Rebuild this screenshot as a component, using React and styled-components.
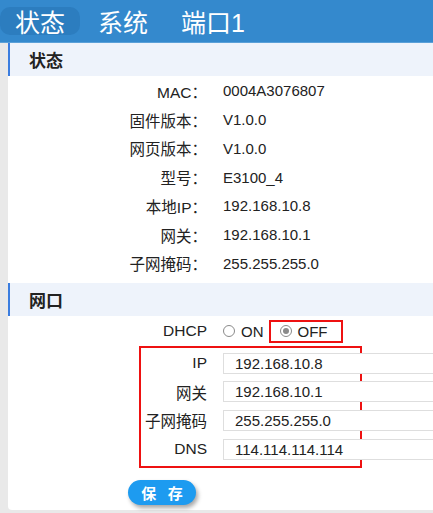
import React from "react";
import styled, { createGlobalStyle } from "styled-components";

const Global = createGlobalStyle`
  html, body { margin: 0; padding: 0; }
  body {
    background: #e9e9e9;
    font-family: "Liberation Sans", Arial, "Noto Sans CJK SC", sans-serif;
    color: #222;
    overflow: hidden;
  }
`;

const Page = styled.div`
  width: 433px;
  height: 513px;
  display: flex;
  flex-direction: column;
  overflow: hidden;
`;

const TopBar = styled.div`
  height: 43px;
  flex: none;
  background: #3489cd;
  display: flex;
  align-items: center;
  gap: 3px;
  border-bottom: 1px solid #5aa0d8;
  box-sizing: border-box;
`;

const Tab = styled.div`
  height: 28px;
  padding: 0 15px;
  border-radius: 10px;
  display: flex;
  align-items: center;
  font-size: 25px;
  color: #fff;
  font-family: "Liberation Sans", "Noto Sans CJK SC", sans-serif;
  background: ${(p) => (p.$active ? "#2c7dbf" : "transparent")};
`;

const Body = styled.div`
  flex: 1;
  display: flex;
  padding-left: 8px;
`;

const Panel = styled.div`
  flex: 1;
  background: #fff;
  border-bottom-left-radius: 4px;
  margin-bottom: 3px;
  display: flex;
  flex-direction: column;
`;

const SectionHeader = styled.div`
  height: 33px;
  flex: none;
  background: #eef3fb;
  border-left: 2px solid #3b7ddf;
  display: flex;
  align-items: center;
  padding-left: 19px;
  font-size: 17px;
  font-weight: bold;
  color: #222;
  font-family: "Noto Sans CJK SC", sans-serif;
`;

const InfoList = styled.div`
  padding: 0.5px 0 5px;
  display: flex;
  flex-direction: column;
`;

const InfoRow = styled.div`
  height: 28.75px;
  display: grid;
  grid-template-columns: 199px 1fr;
  column-gap: 16px;
  align-items: center;
`;

const Label = styled.div`
  text-align: right;
  font-size: 15.5px;
  color: #222;
`;

const Value = styled.div`
  font-size: 15px;
  color: #222;
`;

const NetArea = styled.div`
  display: flex;
  flex-direction: column;
`;

const DhcpRow = styled.div`
  height: 29px;
  margin-top: 1px;
  display: grid;
  grid-template-columns: 199px 1fr;
  column-gap: 16px;
  align-items: center;
`;

const RadioGroup = styled.div`
  display: flex;
  align-items: center;
`;

const RadioOption = styled.label`
  display: inline-flex;
  align-items: center;
  gap: 6px;
  font-size: 15px;
  color: #222;
`;

const RadioCircle = styled.span`
  width: 12px;
  height: 12px;
  box-sizing: border-box;
  border-radius: 50%;
  border: 1px solid #8a8a8a;
  background: #fff;
  display: inline-flex;
  align-items: center;
  justify-content: center;
  &::after {
    content: "";
    width: 6px;
    height: 6px;
    border-radius: 50%;
    background: ${(p) => (p.$checked ? "#8a8a8a" : "transparent")};
  }
`;

const Highlight = styled.div`
  border: 2px solid #ee1111;
  box-sizing: border-box;
  height: 23px;
  display: flex;
  align-items: center;
  padding: 0 13px 0 9px;
  margin-left: 5px;
`;

const FieldBox = styled.div`
  margin-left: 131px;
  width: 223px;
  box-sizing: border-box;
  border: 2px solid #ee1111;
  padding: 1px 0 2px;
  display: flex;
  flex-direction: column;
`;

const FieldRow = styled.div`
  height: 28.7px;
  display: grid;
  grid-template-columns: 66px 240px;
  column-gap: 16px;
  align-items: center;
`;

const FieldLabel = styled.div`
  text-align: right;
  font-size: 15.5px;
  color: #222;
`;

const Input = styled.input`
  height: 21px;
  box-sizing: border-box;
  border: 1px solid #dedede;
  border-right: none;
  padding: 0 0 0 11px;
  font-family: "Liberation Sans", Arial, sans-serif;
  font-size: 15px;
  color: #222;
  outline: none;
  width: 240px;
`;

const SaveButton = styled.button`
  margin: 12px 0 0 120px;
  width: 68px;
  height: 25px;
  border: none;
  border-radius: 13px;
  background: #1d9bf0;
  color: #fff;
  font-size: 15px;
  font-weight: bold;
  font-family: "Noto Sans CJK SC", sans-serif;
  letter-spacing: 4px;
  padding: 0 0 0 4px;
  box-shadow: 2px 3px 4px rgba(0, 0, 0, 0.35);
  display: flex;
  align-items: center;
  justify-content: center;
`;

const info = [
  ["MAC：", "0004A3076807"],
  ["固件版本：", "V1.0.0"],
  ["网页版本：", "V1.0.0"],
  ["型号：", "E3100_4"],
  ["本地IP：", "192.168.10.8"],
  ["网关：", "192.168.10.1"],
  ["子网掩码：", "255.255.255.0"],
];

const fields = [
  ["IP", "192.168.10.8"],
  ["网关", "192.168.10.1"],
  ["子网掩码", "255.255.255.0"],
  ["DNS", "114.114.114.114"],
];

export default function App() {
  return (
    <>
      <Global />
      <Page>
        <TopBar>
          <Tab $active>状态</Tab>
          <Tab>系统</Tab>
          <Tab>端口1</Tab>
        </TopBar>
        <Body>
          <Panel>
            <SectionHeader>状态</SectionHeader>
            <InfoList>
              {info.map(([k, v]) => (
                <InfoRow key={k}>
                  <Label>{k}</Label>
                  <Value>{v}</Value>
                </InfoRow>
              ))}
            </InfoList>
            <SectionHeader>网口</SectionHeader>
            <NetArea>
              <DhcpRow>
                <Label>DHCP</Label>
                <RadioGroup>
                  <RadioOption>
                    <RadioCircle />
                    ON
                  </RadioOption>
                  <Highlight>
                    <RadioOption>
                      <RadioCircle $checked />
                      OFF
                    </RadioOption>
                  </Highlight>
                </RadioGroup>
              </DhcpRow>
              <FieldBox>
                {fields.map(([k, v]) => (
                  <FieldRow key={k}>
                    <FieldLabel>{k}</FieldLabel>
                    <Input defaultValue={v} />
                  </FieldRow>
                ))}
              </FieldBox>
              <div>
                <SaveButton>保 存</SaveButton>
              </div>
            </NetArea>
          </Panel>
        </Body>
      </Page>
    </>
  );
}
